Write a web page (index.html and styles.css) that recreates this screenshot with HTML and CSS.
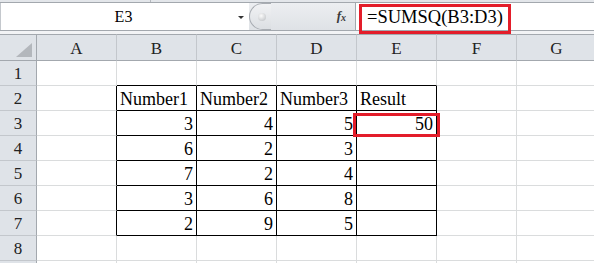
FILE: index.html
```html
<!DOCTYPE html>
<html lang="en">

<head>
    <meta charset="UTF-8">
    <title>SUMSQ</title>
    <link rel="stylesheet" href="styles.css">
</head>

<body>
    <div class="sheet">
        <div class="ribbon-edge"><span class="ribbon-split"></span></div>

        <div class="formula-bar">
            <div class="name-box">
                <span class="name">E3</span>
                <span class="name-arrow"></span>
            </div>
            <div class="fx-area">
                <span class="grip"><span class="grip-dot"></span></span>
                <span class="fx">f<sub>x</sub></span>
            </div>
            <div class="formula-input">=SUMSQ(B3:D3)</div>
        </div>

        <div class="bar-gap"></div>

        <div class="grid">
            <div class="corner"><span class="corner-mark"></span></div>
            <div class="col-head">A</div>
            <div class="col-head">B</div>
            <div class="col-head">C</div>
            <div class="col-head">D</div>
            <div class="col-head">E</div>
            <div class="col-head">F</div>
            <div class="col-head">G</div>

            <div class="row-head">1</div>
            <div class="cell"></div>
            <div class="cell edge-top"></div>
            <div class="cell edge-top"></div>
            <div class="cell edge-top"></div>
            <div class="cell edge-top"></div>
            <div class="cell"></div>
            <div class="cell"></div>

            <div class="row-head">2</div>
            <div class="cell edge-left"></div>
            <div class="cell boxed">Number1</div>
            <div class="cell boxed">Number2</div>
            <div class="cell boxed">Number3</div>
            <div class="cell boxed">Result</div>
            <div class="cell"></div>
            <div class="cell"></div>

            <div class="row-head">3</div>
            <div class="cell edge-left"></div>
            <div class="cell boxed num">3</div>
            <div class="cell boxed num">4</div>
            <div class="cell boxed num">5</div>
            <div class="cell boxed num">50</div>
            <div class="cell"></div>
            <div class="cell"></div>

            <div class="row-head">4</div>
            <div class="cell edge-left"></div>
            <div class="cell boxed num">6</div>
            <div class="cell boxed num">2</div>
            <div class="cell boxed num">3</div>
            <div class="cell boxed"></div>
            <div class="cell"></div>
            <div class="cell"></div>

            <div class="row-head">5</div>
            <div class="cell edge-left"></div>
            <div class="cell boxed num">7</div>
            <div class="cell boxed num">2</div>
            <div class="cell boxed num">4</div>
            <div class="cell boxed"></div>
            <div class="cell"></div>
            <div class="cell"></div>

            <div class="row-head">6</div>
            <div class="cell edge-left"></div>
            <div class="cell boxed num">3</div>
            <div class="cell boxed num">6</div>
            <div class="cell boxed num">8</div>
            <div class="cell boxed"></div>
            <div class="cell"></div>
            <div class="cell"></div>

            <div class="row-head">7</div>
            <div class="cell edge-left"></div>
            <div class="cell boxed num">2</div>
            <div class="cell boxed num">9</div>
            <div class="cell boxed num">5</div>
            <div class="cell boxed"></div>
            <div class="cell"></div>
            <div class="cell"></div>

            <div class="row-head">8</div>
            <div class="cell"></div>
            <div class="cell"></div>
            <div class="cell"></div>
            <div class="cell"></div>
            <div class="cell"></div>
            <div class="cell"></div>
            <div class="cell"></div>

            <!-- next row, only its top edge is on screen -->
            <div class="row-head"></div>
            <div class="cell"></div>
            <div class="cell"></div>
            <div class="cell"></div>
            <div class="cell"></div>
            <div class="cell"></div>
            <div class="cell"></div>
            <div class="cell"></div>
        </div>

        <!-- red annotation boxes -->
        <div class="mark mark-formula"></div>
        <div class="mark mark-cell"></div>
    </div>
</body>

</html>
```

FILE: styles.css
```css
* {
    margin: 0;
    padding: 0;
    box-sizing: border-box;
}

body {
    font-family: 'Liberation Serif', 'Times New Roman', serif;
    background: white;
    color: black;
    overflow: hidden;
}

.sheet {
    position: relative;
    width: 594px;
    height: 263px;
    overflow: hidden;
}

/* top of the ribbon */
.ribbon-edge {
    position: relative;
    height: 3px;
    background: #e3e6ea;
    border-bottom: 1px solid #a3a8ae;
}

.ribbon-split {
    position: absolute;
    left: 150px;
    top: 0;
    width: 1px;
    height: 2px;
    background: #b5b9be;
}

/* formula bar */
.formula-bar {
    display: flex;
    height: 28px;
    border-bottom: 1px solid #a3a8ae;
}

.name-box {
    width: 249px;
    display: flex;
    align-items: center;
    background: white;
    border-left: 1px solid #c4c8cd;
}

.name {
    flex: 1;
    text-align: center;
    font-size: 16px;
    padding-left: 8px;
    padding-top: 1px;
}

.name-arrow {
    width: 0;
    height: 0;
    margin-right: 5px;
    margin-top: 2px;
    border-left: 3px solid transparent;
    border-right: 3px solid transparent;
    border-top: 3px solid #333;
}

.fx-area {
    width: 107px;
    display: flex;
    align-items: center;
    justify-content: space-between;
    background: linear-gradient(#eceef1, #dfe2e6);
    border-right: 1px solid #a3a8ae;
}

.grip {
    width: 22px;
    height: 27px;
    display: flex;
    align-items: center;
    justify-content: center;
    border: 1px solid #a9adb3;
    border-right: none;
    border-radius: 14px 0 0 14px;
    background: linear-gradient(#f1f2f4, #dcdfe3);
}

.grip-dot {
    width: 8px;
    height: 8px;
    margin-left: 2px;
    border-radius: 50%;
    background: radial-gradient(circle at 40% 35%, #fbfbfb, #b9bcc0);
}

.fx {
    font-style: italic;
    font-weight: bold;
    font-size: 13px;
    color: #3a3a3a;
    margin-right: 9px;
    margin-top: -2px;
}

.fx sub {
    font-size: 10px;
    vertical-align: -1px;
}

.formula-input {
    flex: 1;
    background: white;
    font-size: 18.5px;
    line-height: 27px;
    padding-left: 11px;
    padding-top: 1px;
}

.bar-gap {
    height: 3px;
    background: #f2f3f5;
}

/* cells */
.grid {
    display: grid;
    grid-template-columns: 37px repeat(7, 80px);
    grid-template-rows: 27px repeat(9, 25px);
}

.corner,
.col-head,
.row-head {
    background: #dfe3e8;
    color: #222;
    font-size: 17px;
    line-height: 20px;
    display: flex;
    align-items: flex-end;
    justify-content: center;
    padding-bottom: 1px;
}

.corner {
    position: relative;
    border-top: 1px solid #a3a8ae;
    border-right: 1px solid #a3a8ae;
    border-bottom: 1px solid #a3a8ae;
}

.corner-mark {
    position: absolute;
    right: 4px;
    bottom: 3px;
    width: 0;
    height: 0;
    border-left: 16px solid transparent;
    border-bottom: 14px solid #b3b7bc;
}

.col-head {
    border-top: 1px solid #a3a8ae;
    border-bottom: 1px solid #a3a8ae;
    border-right: 1px solid #c3c7cc;
}

.row-head {
    border-right: 1px solid #a3a8ae;
    border-bottom: 1px solid #c3c7cc;
}

.cell {
    font-size: 18px;
    line-height: 20px;
    display: flex;
    align-items: flex-end;
    padding: 0 3px 1px 3px;
    border-right: 1px solid #dadcdd;
    border-bottom: 1px solid #dadcdd;
    white-space: nowrap;
}

.num {
    justify-content: flex-end;
}

.boxed {
    border-right-color: black;
    border-bottom-color: black;
}

.edge-top {
    border-bottom-color: black;
}

.edge-left {
    border-right-color: black;
}

/* red highlight boxes */
.mark {
    position: absolute;
    border: 3px solid #e31d2a;
}

.mark-formula {
    left: 359px;
    top: 4px;
    width: 152px;
    height: 30px;
}

.mark-cell {
    left: 353px;
    top: 113px;
    width: 87px;
    height: 24px;
}
```
